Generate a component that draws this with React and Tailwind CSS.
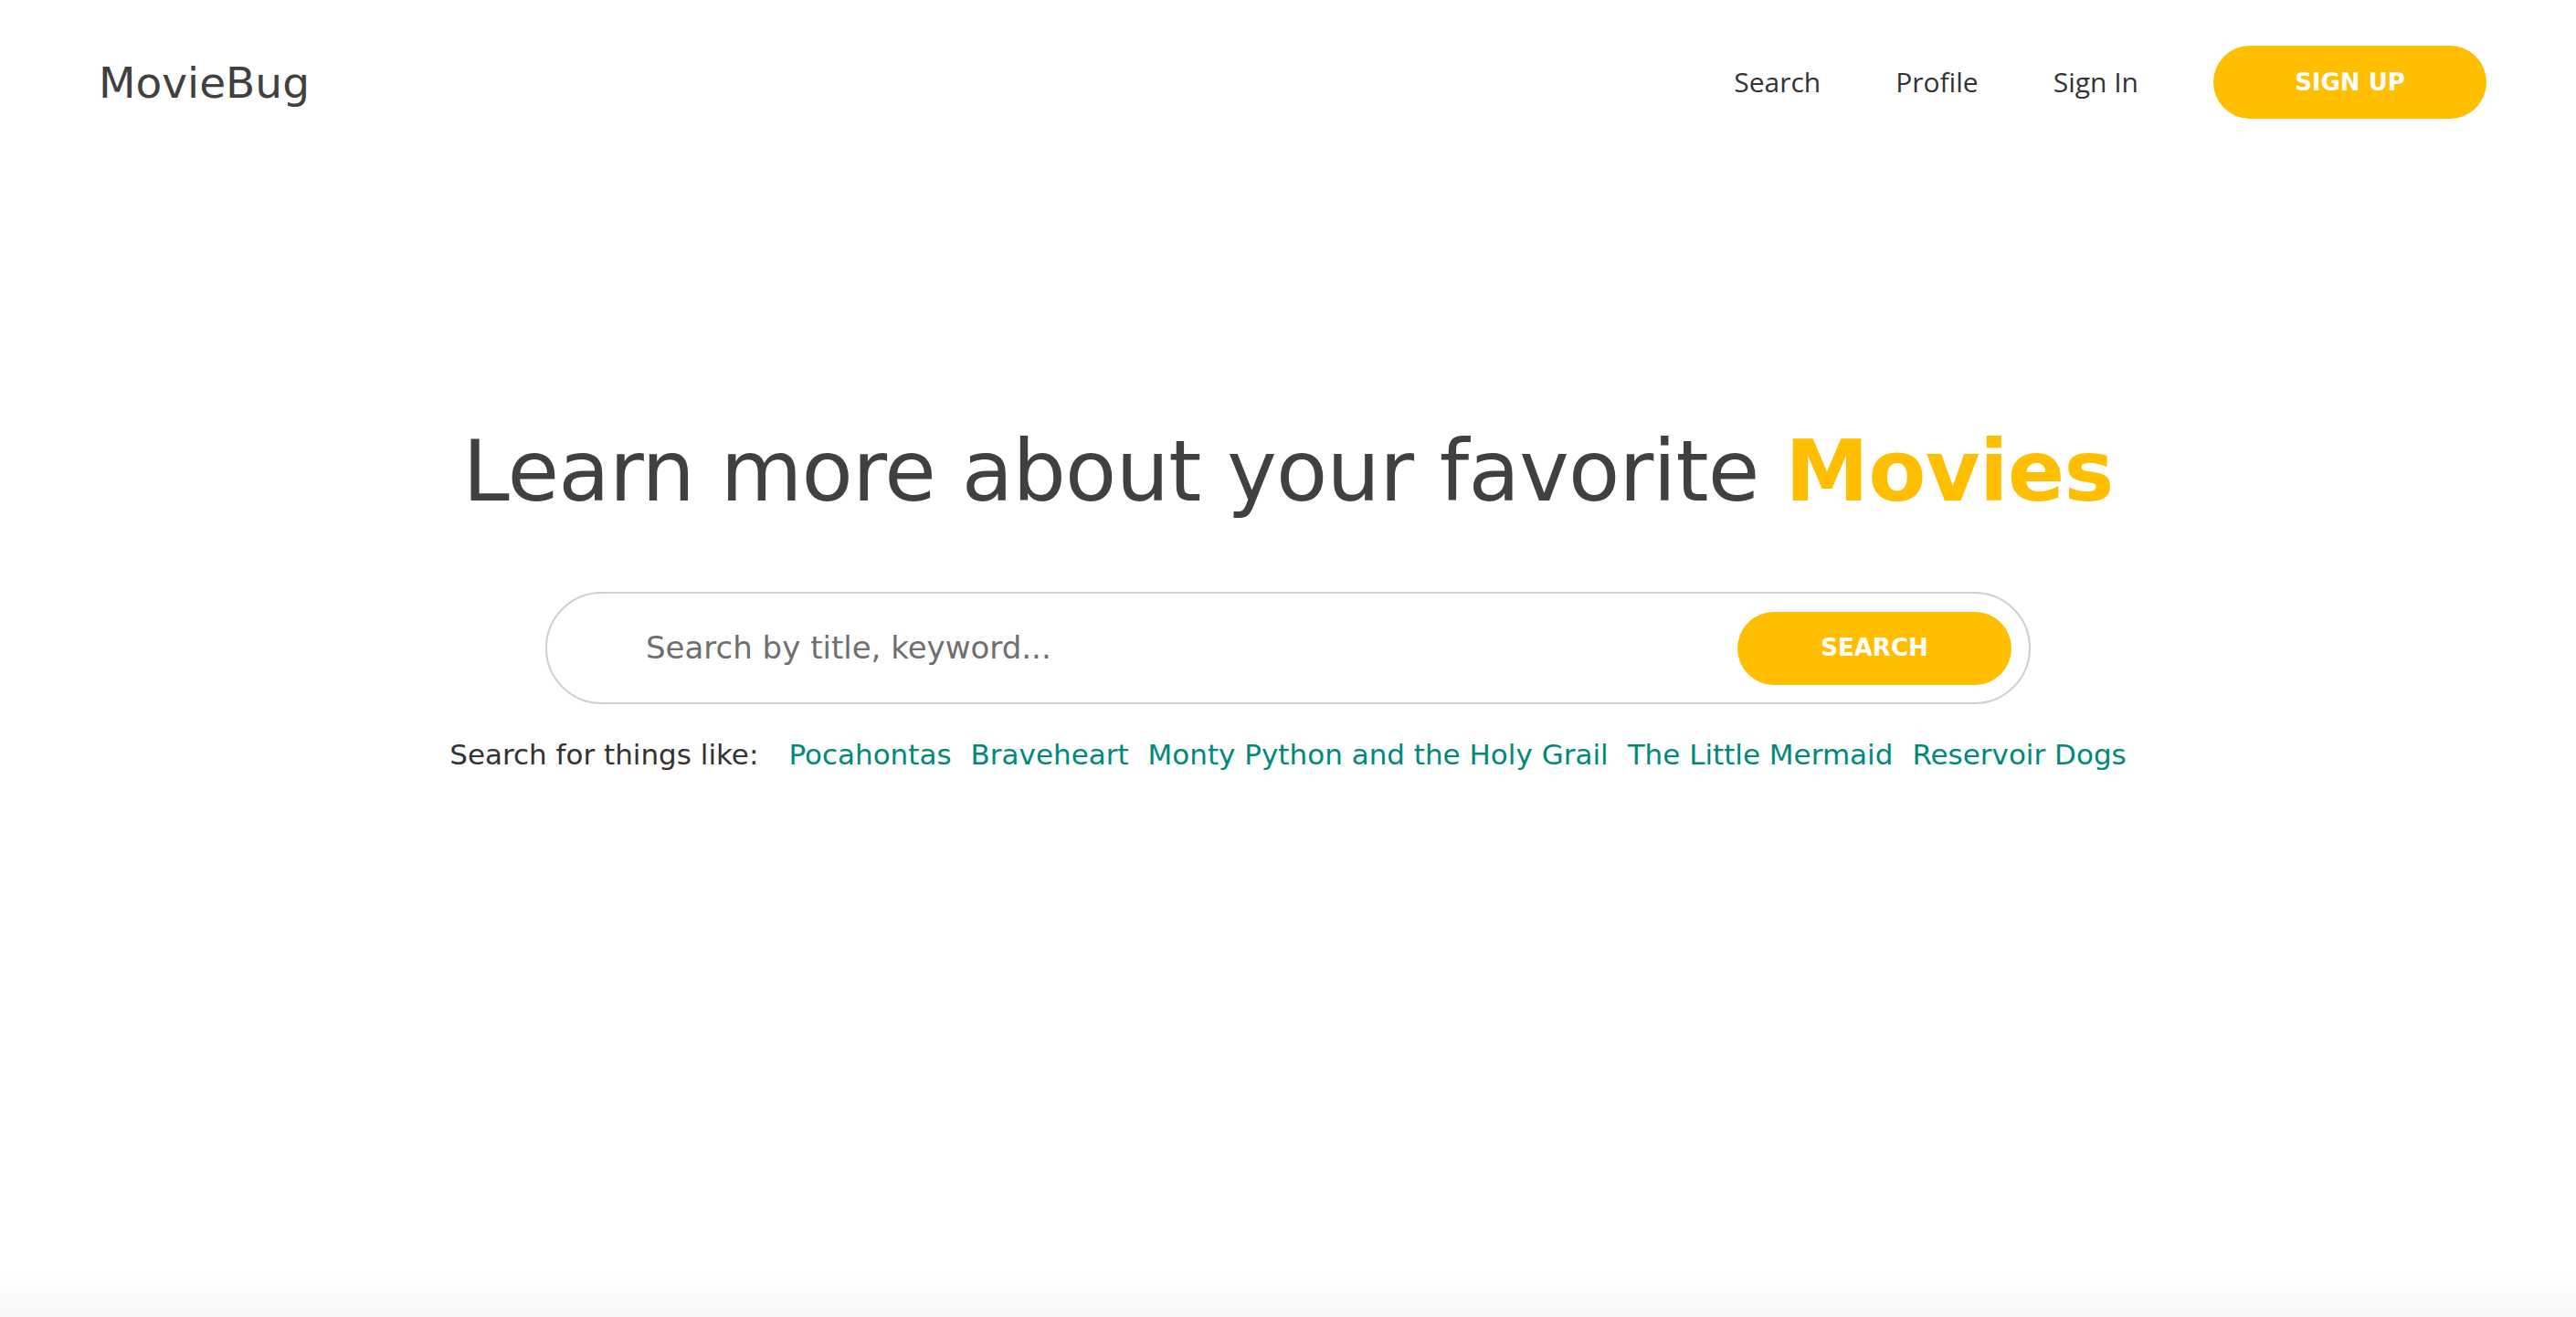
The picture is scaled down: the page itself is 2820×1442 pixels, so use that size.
import React from 'react';

const suggestions = [
  'Pocahontas',
  'Braveheart',
  'Monty Python and the Holy Grail',
  'The Little Mermaid',
  'Reservoir Dogs',
];

const App = () => {
  return (
    <div className="min-h-screen bg-white flex flex-col font-['DejaVu_Sans',sans-serif]">
      {/* Top navigation */}
      <header className="flex items-center justify-between pl-[108px] pr-[98px] pt-[50px]">
        <div className="text-[47px] leading-none text-[#404040]">MovieBug</div>
        <nav className="flex items-center gap-[82px] font-['Open_Sans',sans-serif] text-[30px] text-[#333]">
          <a href="#" className="leading-none">Search</a>
          <a href="#" className="leading-none">Profile</a>
          <a href="#" className="leading-none">Sign In</a>
          <button className="w-[299px] h-[80px] rounded-full bg-[#ffbf00] text-white text-[26px] font-semibold font-['DejaVu_Sans',sans-serif]">
            SIGN UP
          </button>
        </nav>
      </header>

      {/* Hero */}
      <main className="flex flex-col items-center">
        <h1 className="mt-[341px] text-[92px] leading-none tracking-[-0.7px] text-[#404040] font-normal">
          Learn more about your favorite <span className="text-[#ffbf00] font-semibold">Movies</span>
        </h1>

        <div className="mt-[85px] w-[1626px] h-[123px] rounded-full border-2 border-[#cfcfcf] flex items-center pl-[108px] pr-[19px]">
          <input
            type="text"
            placeholder="Search by title, keyword..."
            className="flex-1 bg-transparent outline-none text-[34px] text-[#404040] placeholder:text-[#6f6f6f]"
          />
          <button className="w-[300px] h-[80px] rounded-full bg-[#ffbf00] text-white text-[26px] font-semibold">
            SEARCH
          </button>
        </div>

        <div className="mt-[40px] flex items-center gap-[21px] text-[31px] leading-none">
          <span className="text-[#333] mr-[12px]">Search for things like:</span>
          {suggestions.map((s) => (
            <a key={s} href="#" className="text-[#00897b]">{s}</a>
          ))}
        </div>
      </main>

      <div className="flex-1" />
      <div className="h-[45px] bg-gradient-to-b from-white to-[#f7f7f7]" />
    </div>
  );
};

export default App;
